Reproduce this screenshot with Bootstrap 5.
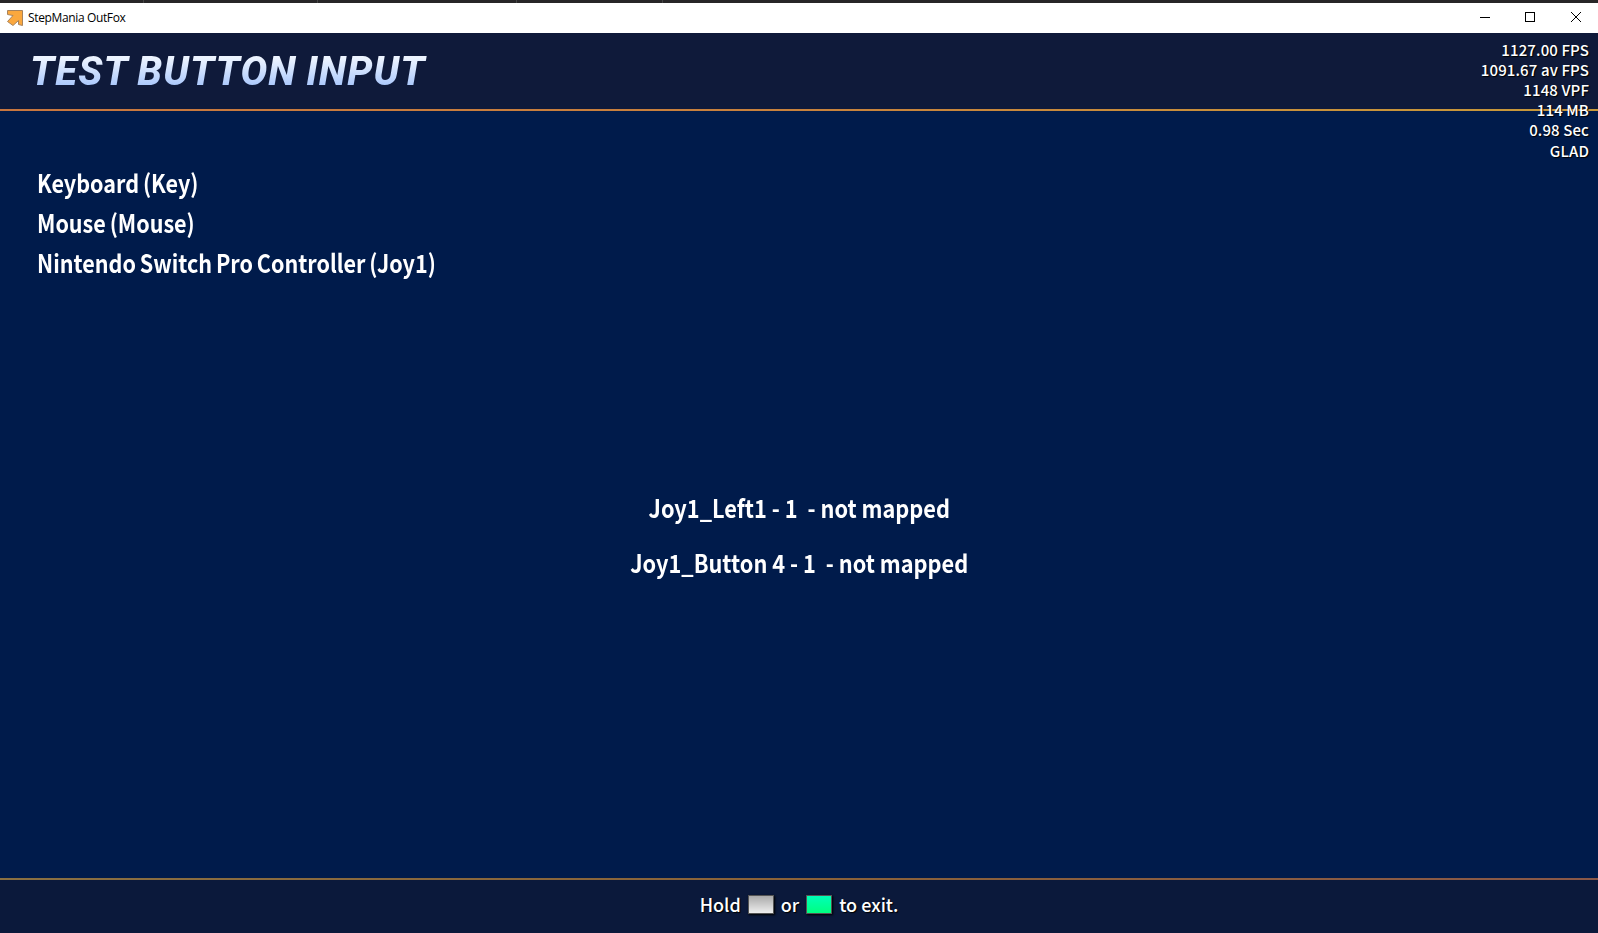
<!DOCTYPE html>
<html lang="en">
<head>
<meta charset="utf-8">
<title>StepMania OutFox</title>
<link href="https://cdn.jsdelivr.net/npm/bootstrap@5.3.0/dist/css/bootstrap.min.css" rel="stylesheet">
<style>
body{background:#001b4b;font-family:"Noto Sans CJK SC","Noto Sans",sans-serif;color:#fff}
.desk-edge{height:3px;background:linear-gradient(#444,#444) 143px 0/1px 3px no-repeat,linear-gradient(#444,#444) 317px 0/1px 3px no-repeat,linear-gradient(#444,#444) 516px 0/1px 3px no-repeat,linear-gradient(#444,#444) 662px 0/1px 3px no-repeat,#272627}
.title-bar{height:30px;background:#fff;color:#000;padding-left:7px}
.title-bar .caption{font:12px/16px "Open Sans",sans-serif;margin:0 0 0 5px;letter-spacing:-.36px}
.title-bar .app-icon{margin-top:-1px}
.win-btn{width:45.5px;height:30px}
.game-head{height:78px;background:#0f1a3a;padding:2px 0 0 28px;border-bottom:2px solid;border-image:linear-gradient(90deg,#c8763f,#c8823d 50%,#c89a3a) 1}
.heading{font:italic 800 40px/1 Roboto,sans-serif;letter-spacing:1.1px;word-spacing:-1.5px;background:linear-gradient(#edf4ff 15%,#aac8fc 85%);-webkit-background-clip:text;background-clip:text;color:transparent;padding:0 8px 0 2px;white-space:nowrap}
.stats{top:39.6px;right:9px;font-size:15px;line-height:20.2px;font-weight:500;letter-spacing:.12px;text-shadow:1px 1px 1px #000}
.devices{padding:51px 0 0 37px;font-size:25px;line-height:40px;font-weight:700}
.devices .line{transform:scaleX(.862);transform-origin:0 50%;word-spacing:-1.2px}
.events{top:480px;left:0;right:0;font-size:25px;line-height:55px;font-weight:700}
.events .line{transform:scaleX(.87)}
.line{white-space:pre;width:max-content}
.game-foot{height:55px;background:#0b193b;border-top:2px solid;border-image:linear-gradient(90deg,#8a7042,#8a6238 50%,#8a5848) 1;font-size:18px;font-weight:500;text-shadow:1px 1px 1px #000;padding-bottom:4px;gap:7px}
.key{width:26px;height:19px;border:1px solid #555;box-shadow:1px 1px 2px #000}
.key-grey{background:linear-gradient(#aaa,#eee)}
.key-green{background:linear-gradient(#00ffb8,#00ff80)}
</style>
</head>
<body class="vh-100 overflow-hidden d-flex flex-column">
<div class="desk-edge"></div>
<header class="title-bar d-flex align-items-center">
<svg class="app-icon" width="16" height="16" viewBox="0 0 16 16"><path d="M.5.5h15v15l-4-1V10.500l-5.500 5L.5 11.500l5.500-6-5.500-1z" fill="#fba83e" stroke="#a8835c"/></svg>
<span class="caption">StepMania OutFox</span>
<div class="d-flex ms-auto">
<svg class="win-btn" viewBox="0 0 45.500 30" fill="none" stroke="#000"><path d="M17.500 14.500h10.500" shape-rendering="crispEdges"/></svg>
<svg class="win-btn" viewBox="0 0 45.500 30" fill="none" stroke="#000"><path d="M18 9.500h9v9h-9z" shape-rendering="crispEdges"/></svg>
<svg class="win-btn" viewBox="0 0 45.500 30" fill="none" stroke="#000"><path d="M18 9l10 10m0-10l-10 10"/></svg>
</div>
</header>
<section class="game-head d-flex align-items-center"><h1 class="heading m-0">TEST BUTTON INPUT</h1></section>
<main class="flex-grow-1 devices">
<div class="line">Keyboard (Key)</div>
<div class="line">Mouse (Mouse)</div>
<div class="line">Nintendo Switch Pro Controller (Joy1)</div>
</main>
<div class="events position-absolute d-flex flex-column align-items-center">
<div class="line">Joy1_Left1 - 1  - not mapped</div>
<div class="line">Joy1_Button 4 - 1  - not mapped</div>
</div>
<div class="stats position-absolute text-end">1127.00 FPS<br>1091.67 av FPS<br>1148 VPF<br>114 MB<br>0.98 Sec<br>GLAD</div>
<footer class="game-foot d-flex justify-content-center align-items-center"><span>Hold</span><span class="key key-grey"></span><span>or</span><span class="key key-green"></span><span>to exit.</span></footer>
<script src="https://cdn.jsdelivr.net/npm/bootstrap@5.3.0/dist/js/bootstrap.bundle.min.js"></script>
</body>
</html>
